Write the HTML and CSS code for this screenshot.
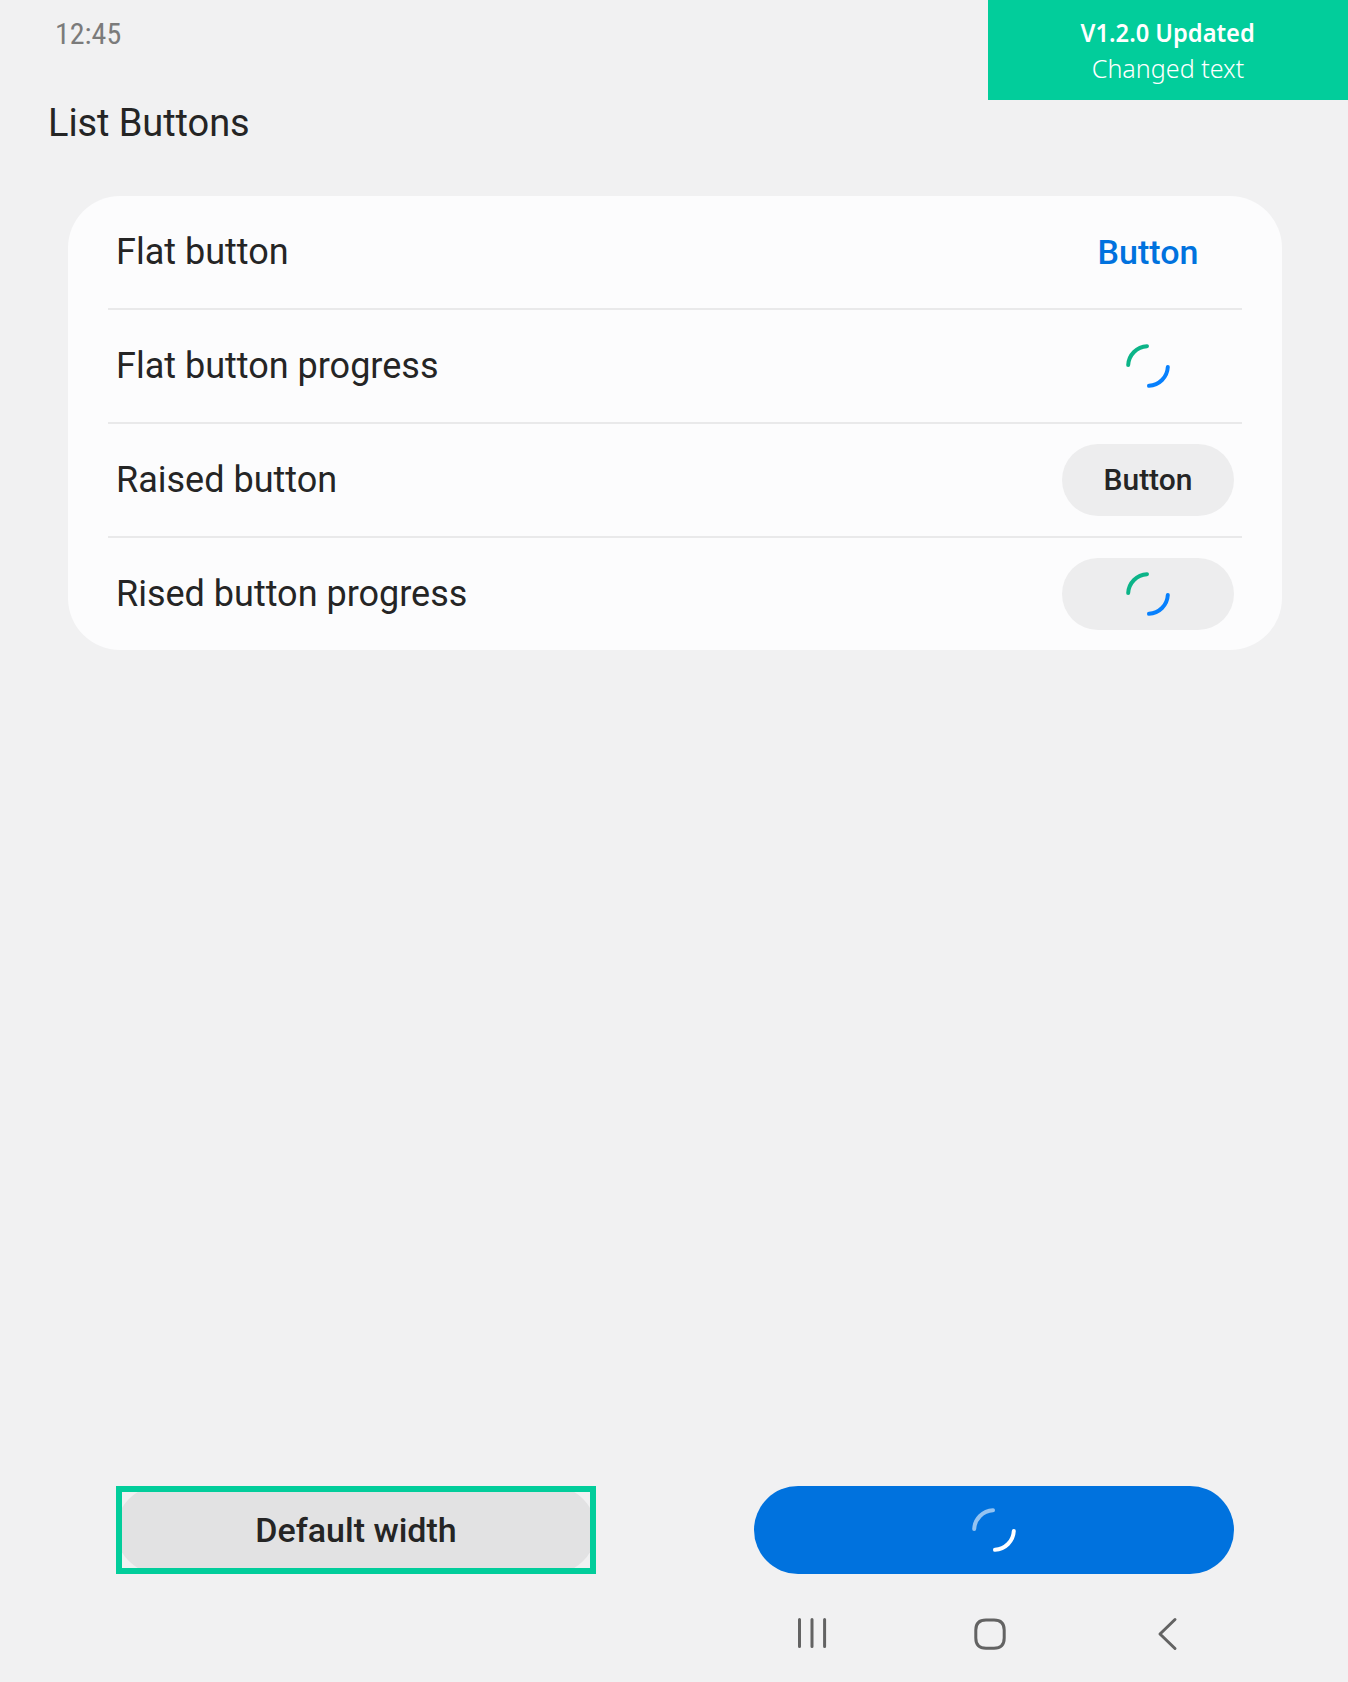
FILE: index.html
```html
<!DOCTYPE html>
<html lang="en">
<head>
<meta charset="utf-8">
<title>List Buttons</title>
<link rel="stylesheet" href="styles.css">
</head>
<body>
<div class="screen">
  <header class="top">
    <div class="heading">
      <div class="clock">12:45</div>
      <h1 class="title">List Buttons</h1>
    </div>
    <div class="note"><strong class="note-title">V1.2.0 Updated</strong><span class="note-text">Changed text</span></div>
  </header>

  <main class="card">
    <div class="row"><span>Flat button</span><button class="btn flat">Button</button></div>
    <div class="row"><span>Flat button progress</span><button class="btn flat" aria-label="Loading">
      <svg class="spinner" viewBox="0 0 48 48"><path class="arc-a" d="M23 4.2A19.8 19.8 0 0 0 4.2 23"/><path class="arc-b" d="M43.8 25A19.8 19.8 0 0 1 25 43.8"/></svg></button></div>
    <div class="row"><span>Raised button</span><button class="btn raised">Button</button></div>
    <div class="row"><span>Rised button progress</span><button class="btn raised" aria-label="Loading">
      <svg class="spinner" viewBox="0 0 48 48"><path class="arc-a" d="M23 4.2A19.8 19.8 0 0 0 4.2 23"/><path class="arc-b" d="M43.8 25A19.8 19.8 0 0 1 25 43.8"/></svg></button></div>
  </main>

  <div class="actions">
    <div class="outlined"><button class="wide">Default width</button></div>
    <button class="wide primary" aria-label="Loading">
      <svg class="spinner light" viewBox="0 0 48 48"><path class="arc-a" d="M23 4.2A19.8 19.8 0 0 0 4.2 23"/><path class="arc-b" d="M43.8 25A19.8 19.8 0 0 1 25 43.8"/></svg></button>
  </div>

  <nav class="navbar">
    <svg viewBox="0 0 40 40"><path d="M7.5 5.5v27M20 5.5v27M32.6 5.5v27"/></svg>
    <svg viewBox="0 0 40 40"><path d="M16 6H24C31 6 34.2 9 34.2 16V24C34.2 31 31 34.2 24 34.2H16C9 34.2 5.8 31 5.8 24V16C5.8 9 9 6 16 6Z"/></svg>
    <svg viewBox="0 0 40 40"><path d="M27 5.5L12 20L27 34.5"/></svg>
  </nav>
</div>
</body>
</html>
```
FILE: styles.css
```css
* { box-sizing: border-box; }
body {
  margin: 0;
  background: #f1f1f2;
  color: #252525;
  font-family: Roboto, "Liberation Sans", sans-serif;
}
.screen {
  width: 1348px;
  height: 1682px;
  display: flex;
  flex-direction: column;
}
.top {
  height: 196px;
  display: flex;
  justify-content: space-between;
  align-items: flex-start;
}
.heading { padding: 16px 0 0 48px; }
.clock {
  padding-left: 7px;
  height: 36px;
  font-size: 30px;
  line-height: 36px;
  color: #7b7b7b;
  font-stretch: 75%;
}
.title {
  margin: 48px 0 0;
  font-size: 38px;
  line-height: 46px;
  font-weight: 400;
  letter-spacing: -0.08px;
}
.note {
  width: 360px;
  height: 100px;
  padding-top: 14px;
  background: #02cd9b;
  color: #fff;
  display: flex;
  flex-direction: column;
  align-items: center;
  font-family: "Noto Sans", "Open Sans", sans-serif;
  font-size: 26px;
  line-height: 36px;
}
.note-title { font-weight: 600; transform: scaleX(0.91); }
.note-text { font-weight: 300; transform: scaleX(0.965); }
.card {
  margin: 0 66px 0 68px;
  padding: 0 40px;
  height: 454px;
  border-radius: 52px;
  background: #fcfcfd;
}
.row {
  height: 114px;
  padding: 0 8px;
  border-bottom: 2px solid #e9e9ea;
  display: flex;
  align-items: center;
  justify-content: space-between;
  font-size: 36px;
}
.row:last-child { height: 112px; border-bottom: 0; }
.btn, .wide {
  border: 0;
  padding: 0;
  display: flex;
  align-items: center;
  justify-content: center;
  font-family: inherit;
  font-weight: 500;
  color: inherit;
}
.btn { width: 172px; height: 72px; border-radius: 36px; }
.flat { background: none; color: #0072de; font-size: 34px; }
.raised { background: #ededee; font-size: 30px; line-height: 34px; padding-bottom: 1px; }
.spinner { width: 48px; height: 48px; flex: none; fill: none; stroke-width: 4; stroke-linecap: round; }
.raised .spinner { margin-top: 1px; }
.arc-a { stroke: #0cb488; }
.arc-b { stroke: #0780fd; }
.light .arc-a { stroke: #94c3f1; }
.light .arc-b { stroke: #fff; }
.actions {
  margin-top: auto;
  padding: 0 114px 0 116px;
  display: flex;
  justify-content: space-between;
}
.outlined {
  width: 480px;
  height: 88px;
  border: 6px solid #02cd9b;
  display: flex;
  align-items: center;
  justify-content: center;
  overflow: hidden;
}
.wide {
  width: 480px;
  height: 88px;
  flex: none;
  border-radius: 44px;
  background: #e2e2e3;
  font-size: 34px;
}
.primary { background: #0072de; }
.navbar {
  height: 108px;
  padding: 40px 160px 0 0;
  display: flex;
  justify-content: flex-end;
  gap: 138px;
}
.navbar svg {
  width: 40px;
  height: 40px;
  fill: none;
  stroke: #636363;
  stroke-width: 3;
  stroke-linecap: round;
  stroke-linejoin: round;
}
```
